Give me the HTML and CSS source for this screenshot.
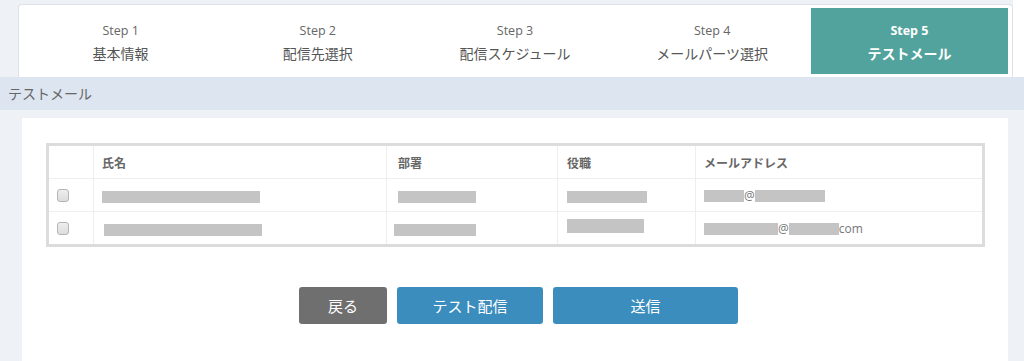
FILE: index.html
```html
<!DOCTYPE html>
<html lang="ja">
<head>
    <meta charset="UTF-8">
    <meta name="viewport" content="width=device-width, initial-scale=1.0">
    <title>テストメール</title>
    <link rel="stylesheet" href="styles.css">
</head>
<body>
    <div class="top">
        <div class="steps">
            <div class="step"><span class="step-no">Step 1</span><span class="step-name">基本情報</span></div>
            <div class="step"><span class="step-no">Step 2</span><span class="step-name">配信先選択</span></div>
            <div class="step"><span class="step-no">Step 3</span><span class="step-name">配信スケジュール</span></div>
            <div class="step"><span class="step-no">Step 4</span><span class="step-name">メールパーツ選択</span></div>
            <div class="step active"><span class="step-no">Step 5</span><span class="step-name">テストメール</span></div>
        </div>
    </div>

    <div class="section-title">テストメール</div>

    <div class="content">
        <div class="panel">
            <table class="members">
                <thead>
                    <tr>
                        <th class="col-check"></th>
                        <th class="col-name">氏名</th>
                        <th class="col-dept">部署</th>
                        <th class="col-post">役職</th>
                        <th>メールアドレス</th>
                    </tr>
                </thead>
                <tbody>
                    <tr>
                        <td class="col-check"><input type="checkbox"></td>
                        <td><span class="mask w158"></span></td>
                        <td class="col-dept"><span class="mask w78"></span></td>
                        <td class="col-post"><span class="mask w80"></span></td>
                        <td class="mail"><span class="mask w40"></span>@<span class="mask w70"></span></td>
                    </tr>
                    <tr>
                        <td class="col-check"><input type="checkbox"></td>
                        <td><span class="mask w158 shift-r"></span></td>
                        <td class="col-dept"><span class="mask w82 shift-l"></span></td>
                        <td class="col-post"><span class="mask w77 raised"></span></td>
                        <td class="mail"><span class="mask w74"></span>@<span class="mask w50"></span>com</td>
                    </tr>
                </tbody>
            </table>

            <div class="buttons">
                <button class="btn btn-back">戻る</button>
                <button class="btn btn-test">テスト配信</button>
                <button class="btn btn-send">送信</button>
            </div>
        </div>
    </div>
</body>
</html>
```

FILE: styles.css
```css
body {
    margin: 0;
    background-color: #eef2f6;
    font-family: "Open Sans", "Noto Sans CJK JP", sans-serif;
    color: #555;
}
.top {
    padding: 4px 11px 0 18px;
    background: linear-gradient(to right, #eef2f6 1013px, #fff 1013px);
}
.steps {
    display: flex;
    background: #fff;
    border: 1px solid #dde2e8;
    border-bottom: 0;
    border-radius: 4px 4px 0 0;
    padding: 3px 4px 3px 3px;
    height: 66px;
}
.step {
    flex: 1;
    display: flex;
    flex-direction: column;
    align-items: center;
    justify-content: center;
    gap: 4px;
    padding-top: 3px;
}
.step-no {
    font-size: 12.5px;
    color: #666;
}
.step-name {
    font-family: "Noto Sans CJK JP", sans-serif;
    font-size: 14px;
    color: #555;
}
.step.active {
    background-color: #52a39d;
}
.step.active .step-no,
.step.active .step-name {
    color: #fff;
    font-weight: bold;
}
.section-title {
    background-color: #dce5f0;
    height: 33px;
    line-height: 33px;
    padding-left: 8px;
    font-family: "Noto Sans CJK JP", sans-serif;
    font-size: 14px;
    color: #666;
}
.content {
    padding: 8px 16px 0 22px;
}
.panel {
    background: #fff;
    padding: 25px 23px 40px 24px;
}
.members {
    width: 100%;
    border-collapse: collapse;
    border: 3px solid #dcdcdc;
    font-family: "Noto Sans CJK JP", sans-serif;
    font-size: 12px;
}
.members th,
.members td {
    border: 1px solid #eee;
    text-align: left;
    padding: 0 7px 0 8px;
}
.members th {
    height: 31px;
    padding-top: 1px;
    font-weight: bold;
    color: #666;
}
.members td {
    height: 32px;
}
.col-check {
    width: 29px;
}
.col-name {
    width: 277px;
}
.members .col-dept {
    width: 152px;
    padding-left: 11px;
}
.members .col-post {
    width: 121px;
    padding-left: 9px;
}
.members td.col-check {
    padding-left: 8px;
}
.members input[type="checkbox"] {
    appearance: none;
    width: 12px;
    height: 13px;
    margin: 0;
    display: block;
    background: linear-gradient(#eee, #dcdcdc);
    border: 1px solid #b5b5b5;
    border-radius: 3px;
    box-sizing: border-box;
}
.mask {
    display: inline-block;
    height: 12px;
    background-color: #c4c4c4;
    vertical-align: middle;
}
.w40 { width: 40px; }
.w50 { width: 50px; }
.w70 { width: 70px; }
.w74 { width: 74px; }
.w77 { width: 77px; }
.w78 { width: 78px; }
.w80 { width: 80px; }
.w82 { width: 82px; }
.w158 { width: 158px; }
.shift-l { margin-left: -4px; }
.shift-r { margin-left: 2px; }
.raised { height: 14px; margin-top: -8px; }
.mail {
    color: #777;
    font-family: "Open Sans", sans-serif;
}
.buttons {
    display: flex;
    justify-content: center;
    gap: 10px;
    margin-top: 40px;
    padding-left: 6px;
}
.btn {
    height: 37px;
    border: 0;
    border-radius: 3px;
    color: #fff;
    font-family: "Noto Sans CJK JP", sans-serif;
    font-size: 15px;
}
.btn-back {
    width: 88px;
    background-color: #6f6f6f;
}
.btn-test {
    width: 146px;
    background-color: #3b8dbd;
}
.btn-send {
    width: 185px;
    background-color: #3b8dbd;
}
```
